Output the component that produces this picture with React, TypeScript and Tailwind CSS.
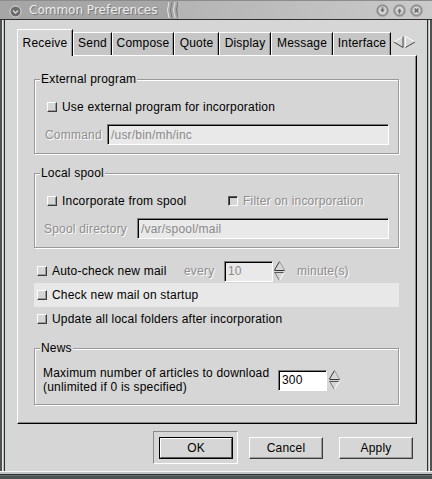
import React from "react";

const dis = "text-[#8e8e8e] [text-shadow:1px_1px_0_#ffffff]";

function Check({ sunken = false }: { sunken?: boolean }) {
  return sunken ? (
    <span className="block w-[10px] h-[10px] shrink-0 border border-t-[#5a5a5a] border-l-[#5a5a5a] border-b-white border-r-white bg-[#d6d6d6] shadow-[inset_1px_1px_0_#222222]" />
  ) : (
    <span className="block w-[10px] h-[10px] shrink-0 border border-t-white border-l-white border-b-[#3c3c3c] border-r-[#3c3c3c] bg-[#d6d6d6] shadow-[inset_-1px_-1px_0_#9a9a9a]" />
  );
}

function Entry({ value, disabled, className }: { value: string; disabled?: boolean; className: string }) {
  return (
    <div
      className={
        "h-[21px] flex items-center pl-[3px] border border-t-[#7c7c7c] border-l-[#7c7c7c] border-b-white border-r-white shadow-[inset_1px_1px_0_#000000] " +
        (disabled ? "bg-[#e9e9e9] text-[#8a8a8a] " : "bg-white text-black ") +
        className
      }
    >
      {value}
    </div>
  );
}

function Spin() {
  return (
    <svg width="11" height="22" viewBox="0 0 11 22" className="shrink-0">
      <line x1="0.5" y1="10" x2="5.5" y2="1.5" stroke="#333" />
      <line x1="5.5" y1="1.5" x2="10.5" y2="10" stroke="#9a9a9a" />
      <line x1="0.5" y1="10.5" x2="10.5" y2="10.5" stroke="#333" />
      <line x1="0.5" y1="12.5" x2="10.5" y2="12.5" stroke="#555" />
      <line x1="0.5" y1="12" x2="5.5" y2="20.5" stroke="#777" />
      <line x1="5.5" y1="20.5" x2="10.5" y2="12" stroke="#ffffff" />
    </svg>
  );
}

function Frame({ label, h, children }: { label: string; h: string; children: React.ReactNode }) {
  return (
    <div className={"border border-[#9a9a9a] shadow-[inset_1px_1px_0_#ffffff,1px_1px_0_#ffffff] flex flex-col " + h}>
      <div className="-mt-[8px] ml-[5px] px-[1px] w-fit h-[14px] leading-[14px] bg-[#d6d6d6]">{label}</div>
      {children}
    </div>
  );
}

function TitleButton({ kind }: { kind: "min" | "max" | "close" }) {
  return (
    <svg width="13" height="13" viewBox="0 0 13 13">
      <circle cx="6.5" cy="6.5" r="6" fill="#8a8a8a" stroke="#a8a8a8" strokeWidth="1" />
      <circle cx="6.5" cy="6.5" r="4.2" fill="#d4d4d4" />
      {kind === "min" && <path d="M4.2 5.4 L6.5 8.6 L8.8 5.4 Z M5.7 3.2 H7.3 V5.6 H5.7 Z" fill="#6e6e6e" />}
      {kind === "max" && <path d="M4.2 7.6 L6.5 4.4 L8.8 7.6 Z M5.7 7.4 H7.3 V9.8 H5.7 Z" fill="#6e6e6e" />}
      {kind === "close" && <path d="M4.6 4.6 L8.4 8.4 M8.4 4.6 L4.6 8.4" stroke="#6e6e6e" strokeWidth="1.5" />}
    </svg>
  );
}

function TitleBar() {
  return (
    <div className="h-[19px] flex items-stretch border-t border-[#8c8c8c] font-['DejaVu_Sans',sans-serif] text-[12px] tracking-normal">
      <div className="w-[166px] bg-[#a6a6a6] flex items-center">
        <svg width="13" height="13" viewBox="0 0 13 13" className="ml-[9px] mt-[2px]">
          <circle cx="6.5" cy="6.5" r="5.5" fill="#6c6c6c" stroke="#dedede" strokeWidth="1" />
          <path d="M4 5.5 L6.5 8 L9 5.5" fill="none" stroke="#d8d8d8" strokeWidth="1.3" />
        </svg>
        <span className="ml-[7px] text-[#ececec] [text-shadow:1px_1px_0_#7a7a7a] leading-[14px]">Common Preferences</span>
      </div>
      <svg width="12" height="18" viewBox="0 0 12 18" className="bg-[#a6a6a6] shrink-0">
        <path d="M3 1 Q0 9 3 17" fill="none" stroke="#e4e4e4" />
        <path d="M6 1 Q3 9 6 17" fill="none" stroke="#7a7a7a" />
        <path d="M9 1 Q6 9 9 17" fill="none" stroke="#e4e4e4" />
        <path d="M12 1 Q9 9 12 17" fill="none" stroke="#7a7a7a" />
      </svg>
      <div className="flex-1 bg-[linear-gradient(to_right,#b4b4b4,#cacaca)] flex items-center justify-end gap-[4px] pr-[9px]">
        <TitleButton kind="min" />
        <TitleButton kind="max" />
        <TitleButton kind="close" />
      </div>
    </div>
  );
}

function Tab({ label, w, active }: { label: string; w: string; active?: boolean }) {
  return active ? (
    <div className={"relative z-10 -mb-px h-[27px] bg-[#d6d6d6] border-l border-t border-white border-r border-r-black shadow-[inset_-1px_0_0_#9a9a9a] pt-[6px] text-center leading-[14px] " + w}>
      {label}
    </div>
  ) : (
    <div className={"h-[23px] bg-[#c6c6c6] border-l border-t border-white border-r border-r-black shadow-[inset_-1px_0_0_#9a9a9a] pt-[3px] text-center leading-[14px] " + w}>
      {label}
    </div>
  );
}

export default function App() {
  return (
    <div className="w-[432px] h-[479px] flex flex-col bg-[#4b5353] font-['Liberation_Sans',Arial,sans-serif] text-[12px] leading-[14px] tracking-[0.2px] text-black overflow-hidden">
      <TitleBar />
      <div className="h-px bg-[#2e2e2e]" />
      <div className="flex h-[451px]">
        <div className="w-[2px] bg-[#4b5353]" />
        <div className="w-px bg-[#e8e8e8]" />
        <div className="w-px bg-[#bcbcbc]" />
        <div className="w-px bg-[#2e2e2e]" />
        <div className="w-[422px] bg-[#d6d6d6] flex flex-col pt-[9px] pl-[12px]">
          {/* Tabs */}
          <div className="flex items-end h-[26px]">
            <Tab label="Receive" w="w-[56px]" active />
            <Tab label="Send" w="w-[39px]" />
            <Tab label="Compose" w="w-[62px]" />
            <Tab label="Quote" w="w-[45px]" />
            <Tab label="Display" w="w-[52px]" />
            <Tab label="Message" w="w-[62px]" />
            <Tab label="Interface" w="w-[58px]" />
            <svg width="23" height="12" viewBox="0 0 23 12" className="ml-[2px] mb-[7px]">
              <path d="M10 0.5 L0.8 6" stroke="#ffffff" fill="none" />
              <path d="M0.8 6 L10 11.5" stroke="#444" fill="none" />
              <path d="M10 0.5 V11.5" stroke="#444" fill="none" />
              <path d="M12.5 0.5 V11.5" stroke="#ffffff" fill="none" />
              <path d="M12.5 0.5 L22 6" stroke="#ffffff" fill="none" />
              <path d="M22 6 L12.5 11.5" stroke="#444" fill="none" />
            </svg>
          </div>
          {/* Panel */}
          <div className="w-[400px] h-[369px] border-t border-l border-white border-r border-b border-r-black border-b-black shadow-[inset_-1px_-1px_0_#8a8a8a] pt-[23px] pl-[16px] pr-[17px] flex flex-col">
            <Frame label="External program" h="h-[75px]">
              <div className="mt-[11px] h-[20px] flex items-center pl-[12px]">
                <Check />
                <span className="ml-[5px]">Use external program for incorporation</span>
              </div>
              <div className="mt-[7px] flex items-center pl-[10px] pr-[9px]">
                <span className={"w-[62px] " + dis}>Command</span>
                <Entry value="/usr/bin/mh/inc" disabled className="flex-1" />
              </div>
            </Frame>
            <div className="mt-[19px]">
              <Frame label="Local spool" h="h-[75px]">
                <div className="mt-[11px] h-[20px] flex items-center pl-[12px]">
                  <div className="w-[181px] flex items-center">
                    <Check />
                    <span className="ml-[5px]">Incorporate from spool</span>
                  </div>
                  <Check sunken />
                  <span className={"ml-[5px] " + dis}>Filter on incorporation</span>
                </div>
                <div className="mt-[7px] flex items-center pl-[9px] pr-[9px]">
                  <span className={"w-[93px] " + dis}>Spool directory</span>
                  <Entry value="/var/spool/mail" disabled className="flex-1" />
                </div>
              </Frame>
            </div>
            <div className="mt-[12px] h-[22px] flex items-center pl-[3px]">
              <div className="w-[147px] flex items-center">
                <Check />
                <span className="ml-[5px]">Auto-check new mail</span>
              </div>
              <span className={"w-[40px] " + dis}>every</span>
              <Entry value="10" disabled className="w-[49px]" />
              <span className="ml-[1px]">
                <Spin />
              </span>
              <span className={"ml-[12px] " + dis}>minute(s)</span>
            </div>
            <div className="mt-[1px] h-[24px] flex items-center pl-[3px] bg-[#e8e8e8]">
              <Check />
              <span className="ml-[5px]">Check new mail on startup</span>
            </div>
            <div className="mt-[1px] h-[22px] flex items-center pl-[3px]">
              <Check />
              <span className="ml-[5px]">Update all local folders after incorporation</span>
            </div>
            <div className="mt-[18px]">
              <Frame label="News" h="h-[57px]">
                <div className="mt-[10px] h-[30px] flex items-center pl-[8px]">
                  <div className="w-[235px] leading-[14px]">
                    <div>Maximum number of articles to download</div>
                    <div>(unlimited if 0 is specified)</div>
                  </div>
                  <Entry value="300" className="w-[49px]" />
                  <span className="ml-[2px]">
                    <Spin />
                  </span>
                </div>
              </Frame>
            </div>
          </div>
          {/* Buttons */}
          <div className="h-[47px] flex items-center pl-[136px]">
            <div className="w-[85px] h-[33px] border border-t-[#8a8a8a] border-l-[#8a8a8a] border-b-white border-r-white flex items-center pl-[5px]">
              <div className="w-[74px] h-[22px] border border-black">
                <div className="w-full h-full border border-t-white border-l-white border-b-[#5a5a5a] border-r-[#5a5a5a] flex items-center justify-center">
                  OK
                </div>
              </div>
            </div>
            <div className="ml-[11px] w-[74px] h-[22px] border border-t-white border-l-white border-b-[#3c3c3c] border-r-[#3c3c3c] shadow-[inset_-1px_-1px_0_#9a9a9a] flex items-center justify-center">
              Cancel
            </div>
            <div className="ml-[16px] w-[74px] h-[22px] border border-t-white border-l-white border-b-[#3c3c3c] border-r-[#3c3c3c] shadow-[inset_-1px_-1px_0_#9a9a9a] flex items-center justify-center">
              Apply
            </div>
          </div>
        </div>
        <div className="w-px bg-[#2e2e2e]" />
        <div className="w-px bg-[#bcbcbc]" />
        <div className="w-px bg-[#e8e8e8]" />
        <div className="w-[2px] bg-[#4b5353]" />
      </div>
      <div className="h-px bg-[#f4f4f4]" />
      <div className="h-[2px] bg-[#c4c4c4]" />
      <div className="h-px bg-[#2e2e2e]" />
      <div className="h-px bg-[#6a7070]" />
      <div className="h-[3px] bg-[#4b5353]" />
    </div>
  );
}
